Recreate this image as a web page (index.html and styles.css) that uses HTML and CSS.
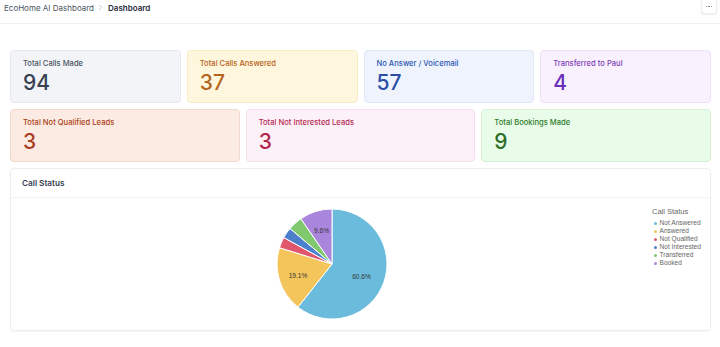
FILE: index.html
```html
<!DOCTYPE html>
<html>
<head>
<meta charset="utf-8">
<link rel="stylesheet" href="styles.css">
</head>
<body>
<header class="topbar">
  <nav class="crumbs">
    <span class="crumb">EcoHome AI Dashboard</span>
    <svg class="chev" viewBox="0 0 6 8" width="5" height="7"><path d="M1.5 1 L4.5 4 L1.5 7" fill="none" stroke="#b8b8b8" stroke-width="0.9"/></svg>
    <span class="crumb current">Dashboard</span>
  </nav>
  <button class="more"><span></span><span></span><span></span></button>
</header>
<main class="content">
  <section class="row row4">
    <div class="card c-gray"><div class="label">Total Calls Made</div><div class="num">94</div></div>
    <div class="card c-yellow"><div class="label">Total Calls Answered</div><div class="num">37</div></div>
    <div class="card c-blue"><div class="label">No Answer / Voicemail</div><div class="num">57</div></div>
    <div class="card c-purple"><div class="label">Transferred to Paul</div><div class="num">4</div></div>
  </section>
  <section class="row row3">
    <div class="card c-orange"><div class="label">Total Not Qualified Leads</div><div class="num">3</div></div>
    <div class="card c-pink"><div class="label">Total Not Interested Leads</div><div class="num">3</div></div>
    <div class="card c-green"><div class="label">Total Bookings Made</div><div class="num">9</div></div>
  </section>
  <section class="chart-card">
    <div class="chart-head">Call Status</div>
    <div class="chart-body">
      <div class="pie-area">
        <svg class="pie" viewBox="-56 -56 112 112" width="112" height="112">
          <g stroke="#fff" stroke-width="1" stroke-linejoin="round">
            <path fill="#6bbcdc" d="M0,0 L0,-55 A55,55 0 1 1 -34.09,43.16 Z"/>
            <path fill="#f3c55b" d="M0,0 L-34.09,43.16 A55,55 0 0 1 -52.53,-16.29 Z"/>
            <path fill="#e2566d" d="M0,0 L-52.53,-16.29 A55,55 0 0 1 -48.24,-26.43 Z"/>
            <path fill="#4b7fcc" d="M0,0 L-48.24,-26.43 A55,55 0 0 1 -42.01,-35.50 Z"/>
            <path fill="#80c86e" d="M0,0 L-42.01,-35.50 A55,55 0 0 1 -31.13,-45.34 Z"/>
            <path fill="#a986dc" d="M0,0 L-31.13,-45.34 A55,55 0 0 1 0,-55 Z"/>
          </g>
          <g class="pct" text-anchor="middle" dominant-baseline="central">
            <text x="29.5" y="12">60.6%</text>
            <text x="-34" y="11">19.1%</text>
            <text x="-10.5" y="-34">9.6%</text>
          </g>
        </svg>
      </div>
      <aside class="legend">
        <div class="legend-title">Call Status</div>
        <ul>
          <li><i style="background:#6bbcdc"></i>Not Answered</li>
          <li><i style="background:#f3c55b"></i>Answered</li>
          <li><i style="background:#e2566d"></i>Not Qualified</li>
          <li><i style="background:#4b7fcc"></i>Not Interested</li>
          <li><i style="background:#80c86e"></i>Transferred</li>
          <li><i style="background:#a986dc"></i>Booked</li>
        </ul>
      </aside>
    </div>
  </section>
</main>
</body>
</html>
```
FILE: styles.css
```css
* { box-sizing: border-box; }
html, body { margin: 0; padding: 0; background: #fff; }
body { font-family: Inter, "Noto Sans", "Liberation Sans", sans-serif; color: #374151; width: 720px; height: 347px; overflow: hidden; }

.topbar {
  height: 24px;
  border-bottom: 1px solid #f1f1f1;
  display: flex;
  justify-content: space-between;
  align-items: flex-start;
  padding: 0 3px 0 4px;
}
.crumbs { display: flex; align-items: center; gap: 4px; height: 15px; font-size: 8px; }
.crumb { color: #4b5563; }
.crumb.current { color: #1f2937; font-weight: 600; margin-left: 1px; }
.chev { display: block; }
.more {
  width: 16px; height: 15px;
  margin-top: -1px;
  border: 1px solid #eceef1;
  border-radius: 3px;
  background: #fff;
  box-shadow: 0 1px 2px rgba(0,0,0,0.08);
  display: flex; align-items: center; justify-content: center; gap: 1px;
  padding: 0;
}
.more span { width: 1.5px; height: 1.5px; background: #6b7280; border-radius: 50%; }

.content { padding: 26px 9px 0 10px; display: flex; flex-direction: column; gap: 6px; }
.row { display: grid; gap: 6px; }
.row4 { grid-template-columns: repeat(4, 1fr); }
.row3 { grid-template-columns: repeat(3, 1fr); }

.card {
  height: 53px;
  border-radius: 4px;
  border: 1px solid;
  padding: 7px 12px;
}
.label { font-size: 7.6px; line-height: 12px; font-weight: 500; }
.num { font-size: 21px; line-height: 26px; font-weight: 500; }

.c-gray { background: #f2f4f8; border-color: #e6e9ee; }
.c-gray .label { color: #4b5563; } .c-gray .num { color: #374151; }
.c-yellow { background: #fef7dd; border-color: #f7ecc6; }
.c-yellow .label { color: #b7621c; } .c-yellow .num { color: #b5641f; }
.c-blue { background: #eff3fd; border-color: #dfe6f8; }
.c-blue .label { color: #2d57b3; } .c-blue .num { color: #2a4ea6; }
.c-purple { background: #f9f1fe; border-color: #efe0fa; }
.c-purple .label { color: #7e3fb6; } .c-purple .num { color: #6b2fb9; }
.c-orange { background: #fbebe2; border-color: #f3d9cd; }
.c-orange .label { color: #ad4220; } .c-orange .num { color: #ab3d1f; }
.c-pink { background: #fdf1f9; border-color: #f5dfec; }
.c-pink .label { color: #b52a52; } .c-pink .num { color: #b0264c; }
.c-green { background: #e9fbe9; border-color: #d5f0d5; }
.c-green .label { color: #2f7b2b; } .c-green .num { color: #2c6e27; }

.chart-card {
  height: 163px;
  border: 1px solid #eceef1;
  border-radius: 4px;
  box-shadow: 0 1px 2px rgba(0,0,0,0.04);
  display: flex; flex-direction: column;
}
.chart-head {
  height: 29px;
  border-bottom: 1px solid #f3f4f6;
  padding: 8px 11px 0;
  font-size: 8.2px; line-height: 12px; font-weight: 600; color: #374151;
}
.chart-body { flex: 1; display: flex; }
.pie-area { flex: 1; display: flex; align-items: center; justify-content: center; }
.pie { display: block; }
.pct text { font-size: 6.6px; fill: #333; font-family: "Liberation Sans", Arial, sans-serif; }

.legend { width: 58px; padding-top: 9px; font-family: "Liberation Sans", Arial, sans-serif; color: #666; }
.legend-title { font-size: 7.5px; line-height: 10px; margin-bottom: 2px; }
.legend ul { list-style: none; margin: 0; padding: 0 0 0 2px; }
.legend li { font-size: 6.6px; line-height: 8px; height: 8px; display: flex; align-items: center; }
.legend li i { width: 3px; height: 3px; border-radius: 50%; margin-right: 2.5px; display: block; }
```
